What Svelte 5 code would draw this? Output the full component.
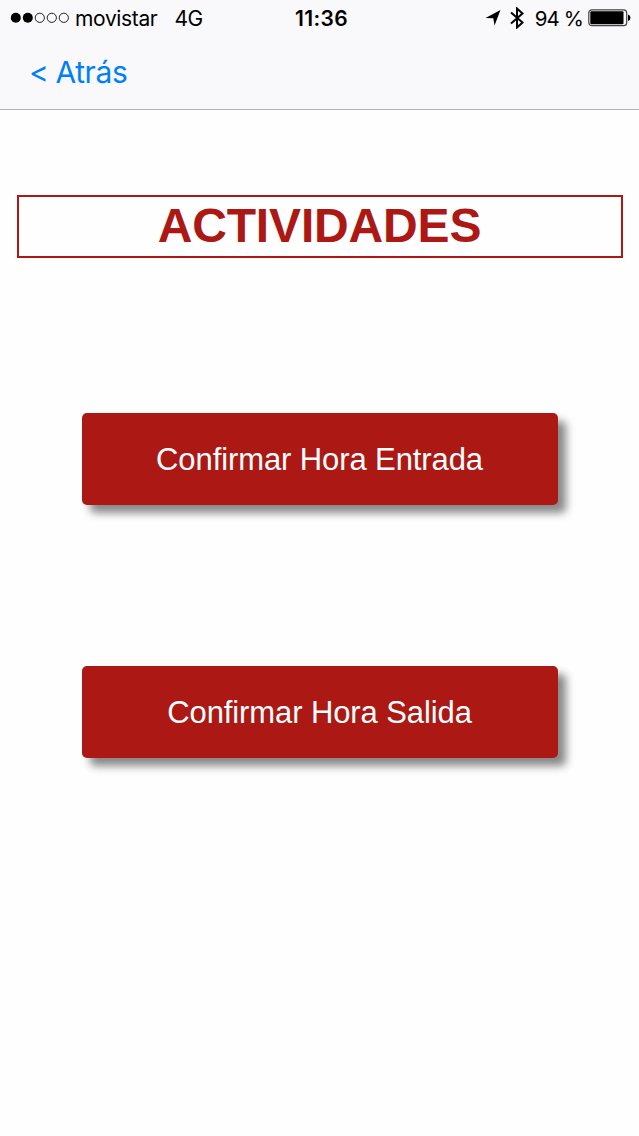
<script lang="ts">
	let carrier: string = "movistar";
	let network: string = "4G";
	let time: string = "11:36";
	let battery: string = "94 %";
	let title: string = "ACTIVIDADES";
	let actions: string[] = ["Confirmar Hora Entrada", "Confirmar Hora Salida"];
	let signal: boolean[] = [true, true, false, false, false];
</script>

<div class="screen">
	<header>
		<div class="status">
			<div class="left">
				<svg class="signal" width="60" height="12" viewBox="0 0 60 12">
					{#each signal as on, i}
						<circle cx={5.8 + i * 12} cy="5.8" r={on ? 5 : 4.6} fill={on ? "#000" : "none"} stroke={on ? "none" : "#222"} />
					{/each}
				</svg>
				<span class="carrier">{carrier}</span>
				<span class="network">{network}</span>
			</div>
			<div class="time">{time}</div>
			<div class="right">
				<svg width="16" height="16" viewBox="0 0 16 16"><path d="M15.5 0 L9.5 15.5 L8.3 8.3 L0.5 8 Z" /></svg>
				<svg class="bluetooth" width="14" height="22" viewBox="0 0 14 22"><path d="M1 5.5 L12.5 15.5 L7 20.5 V1.5 L12.5 6.5 L1 16.5" fill="none" stroke="#000" stroke-width="2" /></svg>
				<span class="percent">{battery}</span>
				<svg width="43" height="18" viewBox="0 0 43 18">
					<rect x="0.8" y="0.8" width="37.9" height="15.9" rx="3" fill="none" stroke="#444" stroke-width="1.2" />
					<rect x="2.3" y="2.3" width="33.2" height="12.9" rx="1" />
					<path d="M40 5.5 Q42.5 6.2 42.5 8.7 Q42.5 11.2 40 12 Z" />
				</svg>
			</div>
		</div>
		<button class="back">&lt; Atrás</button>
	</header>

	<main>
		<h1>{title}</h1>
		{#each actions as action}
			<button class="action">{action}</button>
		{/each}
	</main>
</div>

<style>
	:global(body) {
		background: #fefefe;
	}
	.screen {
		height: 1136px;
		overflow: hidden;
		font-family: "Liberation Sans", Arial, sans-serif;
	}
	header {
		box-sizing: border-box;
		height: 110px;
		background: #f9f8fa;
		border-bottom: 1px solid #b2b1b3;
	}
	.status {
		display: grid;
		grid-template-columns: 1fr auto 1fr;
		align-items: center;
		height: 36px;
		padding: 0 8px 0 10px;
		font-family: Inter, sans-serif;
		font-size: 21px;
	}
	.left, .right {
		display: flex;
		align-items: center;
	}
	.right {
		justify-content: flex-end;
	}
	.carrier {
		margin-left: 5px;
		letter-spacing: -0.35px;
	}
	.network {
		margin-left: 17px;
		letter-spacing: -0.6px;
	}
	.time {
		padding-left: 2px;
		font-weight: 600;
		letter-spacing: 0.4px;
	}
	.bluetooth {
		margin: 0 11px 0 9px;
	}
	.percent {
		margin-right: 5px;
		font-size: 20.5px;
		letter-spacing: -0.9px;
	}
	button {
		border: 0;
		padding: 0;
		font-family: inherit;
	}
	.back {
		display: block;
		margin: 17px 0 0 29px;
		background: none;
		color: #007ffb;
		font-family: Inter, sans-serif;
		font-size: 30px;
		letter-spacing: -0.4px;
		word-spacing: -1px;
		line-height: 38px;
	}
	h1 {
		box-sizing: border-box;
		height: 63px;
		margin: 85px 16px 155px 17px;
		padding-right: 1px;
		border: 2px solid #ac1814;
		color: #ac1814;
		font-size: 48px;
		letter-spacing: -0.15px;
		line-height: 58px;
		text-align: center;
	}
	.action {
		display: block;
		width: 476px;
		height: 92px;
		margin: 0 0 161px 82px;
		padding: 1px 1px 0 0;
		border-radius: 5px;
		background: #ac1814;
		box-shadow: 8px 8px 8px #888;
		color: #fff;
		font-size: 31px;
		letter-spacing: -0.1px;
	}
</style>
